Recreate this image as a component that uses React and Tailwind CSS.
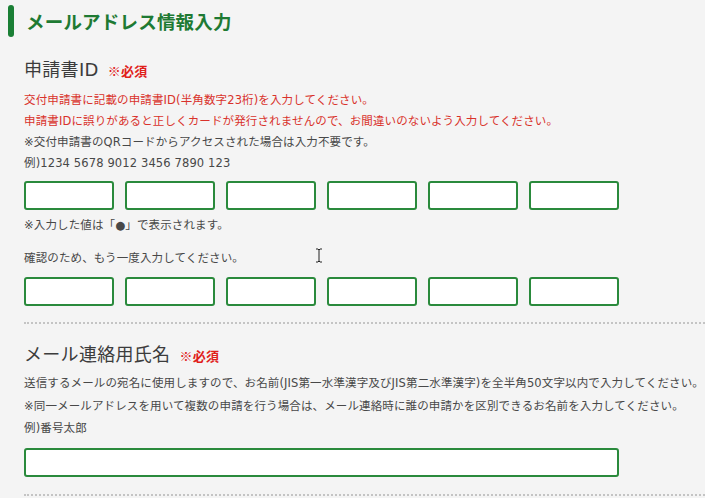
import React from 'react';

const green = 'border-[#2a8a3c]';

const IdRow = () => (
  <div className="flex gap-[11px]">
    {[0, 1, 2, 3, 4, 5].map((i) => (
      <input
        key={i}
        type="text"
        className={`w-[90px] h-[29px] bg-white border-2 ${green} rounded-[3px] outline-none`}
      />
    ))}
  </div>
);

const Required = () => (
  <span className="ml-[9px] text-[13px] font-bold text-[#e0201a] align-middle font-['Noto_Sans_CJK_JP',sans-serif]">※必須</span>
);

const App = () => {
  return (
    <div className="relative w-[705px] h-[498px] overflow-hidden bg-[#f4f4f4] text-[#484848] font-['DejaVu_Sans','Noto_Sans_CJK_JP',sans-serif]">
      {/* page title */}
      <div className="flex items-center h-[38px] pt-[3px]">
        <div className="ml-[8px] w-[6px] h-[32px] rounded-[3px] bg-[#1a7f35]" />
        <h1 className="ml-[12px] text-[18.5px] font-bold text-[#1e7a33] tracking-[0.2px] leading-[32px] font-['Noto_Sans_CJK_JP',sans-serif]">
          メールアドレス情報入力
        </h1>
      </div>

      <div className="pl-[24px]">
        {/* 申請書ID */}
        <h2 className="mt-[20px] h-[24px] leading-[24px] text-[18px] text-[#3c3c3c] tracking-[0.3px] whitespace-nowrap">
          申請書ID<Required />
        </h2>
        <div className="mt-[8px] text-[11.5px] leading-[21px] tracking-[0.13px] whitespace-nowrap">
          <p className="text-[#d9322b]">交付申請書に記載の申請書ID(半角数字23桁)を入力してください。</p>
          <p className="text-[#d9322b]">申請書IDに誤りがあると正しくカードが発行されませんので、お間違いのないよう入力してください。</p>
          <p>※交付申請書のQRコードからアクセスされた場合は入力不要です。</p>
          <p>例)1234 5678 9012 3456 7890 123</p>
        </div>
        <div className="mt-[7px]">
          <IdRow />
        </div>
        <p className="mt-[5px] text-[11.5px] leading-[21px] tracking-[0.13px]">※入力した値は「●」で表示されます。</p>
        <p className="mt-[12px] text-[11.5px] leading-[21px] tracking-[0.13px]">確認のため、もう一度入力してください。</p>
        <div className="mt-[8px]">
          <IdRow />
        </div>
        <div className="mt-[16px] border-t-2 border-dotted border-[#c4c4c4]" />

        {/* メール連絡用氏名 */}
        <h2 className="mt-[19px] h-[24px] leading-[24px] text-[18px] text-[#3c3c3c] tracking-[0.3px] whitespace-nowrap">
          メール連絡用氏名<Required />
        </h2>
        <div className="mt-[5px] text-[11.5px] leading-[22.5px] tracking-[0.13px] whitespace-nowrap">
          <p>送信するメールの宛名に使用しますので、お名前(JIS第一水準漢字及びJIS第二水準漢字)を全半角50文字以内で入力してください。</p>
          <p>※同一メールアドレスを用いて複数の申請を行う場合は、メール連絡時に誰の申請かを区別できるお名前を入力してください。</p>
          <p>例)番号太郎</p>
        </div>
        <input
          type="text"
          className={`mt-[8px] block w-[595px] h-[29px] bg-white border-2 ${green} rounded-[3px] outline-none`}
        />
        <div className="mt-[17px] border-t-2 border-dotted border-[#c4c4c4]" />
      </div>

      {/* mouse text cursor */}
      <svg className="absolute left-[315px] top-[248px]" width="8" height="15" viewBox="0 0 8 15">
        <path d="M1 1h2l1 1 1-1h2M4 2v11M1 14h2l1-1 1 1h2" fill="none" stroke="#222" strokeWidth="1" />
      </svg>
    </div>
  );
};

export default App;
